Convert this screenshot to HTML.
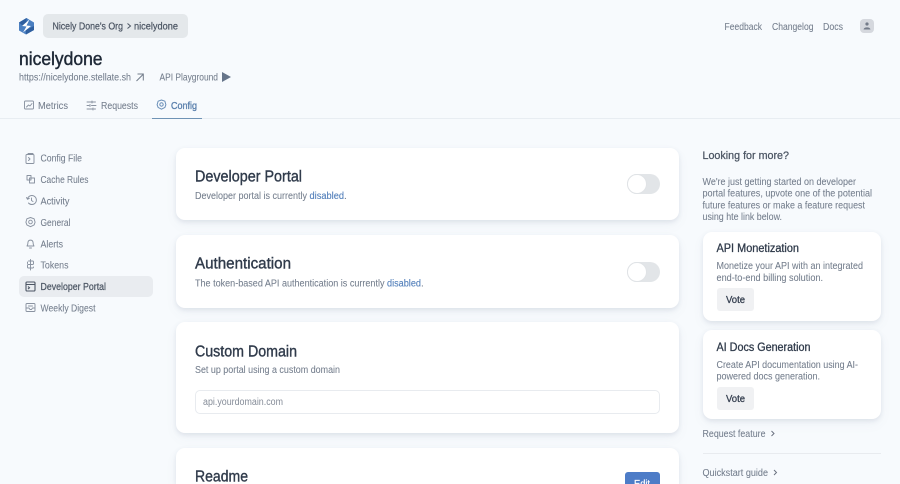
<!DOCTYPE html>
<html><head><meta charset="utf-8"><style>
html,body{margin:0;padding:0;width:900px;height:484px;overflow:hidden;background:#f7fafd}
#r{position:relative;width:900px;height:484px;overflow:hidden;background:#f7fafd}
.b{position:absolute;box-sizing:border-box}
.c{background:#fff;border-radius:9px;box-shadow:0 2px 5px rgba(100,116,139,.14),0 5px 12px rgba(100,116,139,.05)}
svg{position:absolute;left:0;top:0}
text{font-family:"Liberation Sans",sans-serif;white-space:pre}
.s{font-size:10px;fill:#737d8c;stroke:#737d8c;stroke-width:.06px}
.d{font-size:10px;fill:#4b5563;stroke:#4b5563;stroke-width:.22px}
.l{font-size:10px;fill:#5480bb;stroke:#5480bb;stroke-width:.12px}
.v{font-size:10px;fill:#374151;stroke:#374151;stroke-width:.3px}
.t{font-size:15.5px;fill:#303b4b;stroke:#303b4b;stroke-width:.38px}
.t2{font-size:11.5px;fill:#303b4b;stroke:#303b4b;stroke-width:.3px}
.ic{fill:none;stroke:#8a93a1;stroke-width:.95;stroke-linecap:round;stroke-linejoin:round}
</style></head><body><div id="r">
<div class="b" style="left:0;top:118px;width:900px;height:1px;background:#e8edf2"></div>
<div class="b" style="left:152px;top:117.5px;width:50px;height:1.5px;background:#6f93b5"></div>
<div class="b" style="left:43px;top:14px;width:145px;height:24px;background:#e4e8eb;border-radius:5px"></div>
<div class="b" style="left:860px;top:19px;width:14px;height:14px;background:#d5d8de;border-radius:4px"></div>
<div class="b" style="left:19px;top:276px;width:134px;height:21px;background:#e9ecf0;border-radius:5px"></div>
<div class="b c" style="left:176px;top:148px;width:503px;height:72px"></div>
<div class="b c" style="left:176px;top:235px;width:503px;height:73px"></div>
<div class="b c" style="left:176px;top:322px;width:503px;height:111px"></div>
<div class="b c" style="left:176px;top:448px;width:503px;height:36px;border-radius:9px 9px 0 0"></div>
<div class="b" style="left:195px;top:390px;width:465px;height:24px;background:#fff;border:1px solid #e8ebef;border-radius:5px"></div>
<div class="b" style="left:625px;top:472px;width:35px;height:12px;background:#4d7cc7;border-radius:3px 3px 0 0"></div>
<div class="b" style="left:627px;top:174px;width:33px;height:20px;background:#e2e5e8;border-radius:10px"></div>
<div class="b" style="left:627px;top:174px;width:20px;height:20px;background:#fff;border:1px solid #e0e3e6;border-radius:50%"></div>
<div class="b" style="left:627px;top:261.5px;width:33px;height:20px;background:#e2e5e8;border-radius:10px"></div>
<div class="b" style="left:627px;top:261.5px;width:20px;height:20px;background:#fff;border:1px solid #e0e3e6;border-radius:50%"></div>
<div class="b c" style="left:703px;top:232px;width:178px;height:89px"></div>
<div class="b c" style="left:703px;top:330px;width:178px;height:89px"></div>
<div class="b" style="left:717px;top:288px;width:37px;height:23px;background:#f0f1f3;border-radius:3px"></div>
<div class="b" style="left:717px;top:387px;width:37px;height:23px;background:#f0f1f3;border-radius:3px"></div>
<div class="b" style="left:703px;top:453px;width:178px;height:1px;background:#e8ebef"></div>

<svg width="900" height="484" viewBox="0 0 900 484" xmlns="http://www.w3.org/2000/svg">
<path d="M26.5 18 L34 22.5 L34 30 L26 34.5 L19 30.5 L19 22.5 Z" fill="#4a7fc1"/>
<path d="M19 22.5 L26.500 18 L26.500 23 L23 26 Z" fill="#2f5f9f"/>
<path d="M34 26 L34 30 L26 34.500 L26 30 Z" fill="#2f5f9f"/>
<path d="M29.5 19.500 L22 26 L26.500 26.500 L23 32.500 L31 26 L26.500 25.500 Z" fill="#fff"/>

<text class="d" x="52.5" y="29.5" textLength="70.5" lengthAdjust="spacingAndGlyphs">Nicely Done's Org</text>
<path d="M127.5 23.5 L130.5 26 L127.5 28.5" fill="none" stroke="#4b5563" stroke-width="1"/>
<text class="d" x="134" y="29.5" textLength="44" lengthAdjust="spacingAndGlyphs">nicelydone</text>
<text x="19" y="65" font-size="18.5" fill="#1f2937" stroke="#1f2937" stroke-width=".45" textLength="83.5" lengthAdjust="spacingAndGlyphs">nicelydone</text>
<text class="s" x="19" y="80.5" textLength="112" lengthAdjust="spacingAndGlyphs">https://nicelydone.stellate.sh</text>
<path d="M136.5 81 L143 74.5 M137.5 74 L143.3 74 L143.3 80.5" fill="none" stroke="#737d8c" stroke-width="1"/>
<text class="s" x="159.5" y="80.5" textLength="58.5" lengthAdjust="spacingAndGlyphs">API Playground</text>
<path d="M222 72 L231 77 L222 82 Z" fill="#66758a"/>
<text class="s" x="724.5" y="30" textLength="37.5" lengthAdjust="spacingAndGlyphs">Feedback</text>
<text class="s" x="772" y="30" textLength="41.5" lengthAdjust="spacingAndGlyphs">Changelog</text>
<text class="s" x="823" y="30" textLength="20" lengthAdjust="spacingAndGlyphs">Docs</text>
<circle cx="867" cy="24" r="1.6" fill="#747c8a"/>
<path d="M863.6 29.5 C863.6 26.6 870.4 26.6 870.4 29.5 Z" fill="#747c8a"/>

<path class="ic" d="M25.5 101 h7 a1 1 0 0 1 1 1 v6 a1 1 0 0 1 -1 1 h-7 a1 1 0 0 1 -1 -1 v-6 a1 1 0 0 1 1 -1 Z M26.5 107 l2 -2 l1.5 1 l2 -2.5"/>
<text class="s" x="38" y="109" textLength="30" lengthAdjust="spacingAndGlyphs">Metrics</text>
<path class="ic" d="M87 102 h8.5 M87 105.500 h2 M91.500 105.500 h4.500 M87 109 h5.500 M94 109 h1.500 M92 101 v2 M90 104.500 v2 M93 108 v2"/>
<text class="s" x="101" y="109" textLength="37" lengthAdjust="spacingAndGlyphs">Requests</text>
<path d="M161.5 100 l3.4 1.2 l1 3.500 l-1 2.700 l-3.400 1.800 l-3.400 -1.800 l-1 -2.700 l1 -3.500 Z" fill="none" stroke="#6a8fb8" stroke-width="1" stroke-linejoin="round"/>
<circle cx="161.5" cy="104.5" r="1.7" fill="none" stroke="#6a8fb8" stroke-width="1"/>
<text x="171" y="109" font-size="10" fill="#5b80ad" stroke="#5b80ad" stroke-width=".35" textLength="26" lengthAdjust="spacingAndGlyphs">Config</text>

<g class="ic">
<path d="M28 154.5 h5 a1 1 0 0 1 1 1 v7 a1 1 0 0 1 -1 1 h-6 a1 1 0 0 1 -1 -1 v-7 a1 1 0 0 1 1 -1 Z M28 153.500 h5 M28.500 157.500 l1.500 1.500 l-1.500 1.500"/>
<path d="M27 175.5 h4 v4.500 h-4 Z M29.500 178 h5 v5 h-5 Z"/>
<path d="M27.5 199 a4.500 4.500 0 1 1 1 4 M26.500 197.500 l1 1.800 l1.800 -1 M31.500 198 v2.500 l1.500 1"/>
<path d="M30.5 217.5 l3.600 1.300 l1 3.400 l-1 2.700 l-3.600 1.800 l-3.600 -1.800 l-1 -2.700 l1 -3.400 Z"/>
<circle cx="30.5" cy="222" r="1.8"/>
<path d="M27 246 c1 -1 .8 -3 1 -4 a2.600 2.600 0 0 1 5 0 c.2 1 0 3 1 4 Z M29.500 248 h2"/>
<path d="M28.5 261 h4 a1 1 0 0 1 1 1 v1.500 a1 1 0 0 1 -1 1 h-4 a1 1 0 0 0 -1 1 v1.500 a1 1 0 0 0 1 1 h4 a1 1 0 0 0 1 -1 M30.500 259.500 v10.500 M27.500 262 v1.500"/>
<path d="M27 303.5 h7 a1 1 0 0 1 1 1 v6 a1 1 0 0 1 -1 1 h-7 a1 1 0 0 1 -1 -1 v-6 a1 1 0 0 1 1 -1 Z M26.500 308 h2.500 l1 1.500 h1.500 l1 -1.500 h2.500 M28.500 306 h4"/>
</g>
<path d="M27 282 h7 a1 1 0 0 1 1 1 v7 a1 1 0 0 1 -1 1 h-7 a1 1 0 0 1 -1 -1 v-7 a1 1 0 0 1 1 -1 Z M26 284.500 h9 M28 286.500 l1.500 1.300 l-1.500 1.300" fill="none" stroke="#4b5563" stroke-width="1.1"/>
<text class="s" x="40.5" y="161.5" textLength="41.5" lengthAdjust="spacingAndGlyphs">Config File</text>
<text class="s" x="40.5" y="183" textLength="48" lengthAdjust="spacingAndGlyphs">Cache Rules</text>
<text class="s" x="40.5" y="204.5" textLength="29" lengthAdjust="spacingAndGlyphs">Activity</text>
<text class="s" x="40.5" y="226" textLength="30" lengthAdjust="spacingAndGlyphs">General</text>
<text class="s" x="40.5" y="247.5" textLength="22.5" lengthAdjust="spacingAndGlyphs">Alerts</text>
<text class="s" x="40.5" y="268.5" textLength="28" lengthAdjust="spacingAndGlyphs">Tokens</text>
<text class="s" x="40.5" y="311.5" textLength="55" lengthAdjust="spacingAndGlyphs">Weekly Digest</text>
<text class="d" x="40.5" y="290" textLength="65.5" lengthAdjust="spacingAndGlyphs">Developer Portal</text>

<text class="t" x="195" y="181.5" textLength="107" lengthAdjust="spacingAndGlyphs">Developer Portal</text>
<text class="s" x="195" y="199" textLength="112" lengthAdjust="spacingAndGlyphs">Developer portal is currently</text>
<text class="l" x="309.5" y="199" textLength="34.5" lengthAdjust="spacingAndGlyphs">disabled</text>
<text class="s" x="344" y="199">.</text>
<text class="t" x="195" y="268.5" textLength="96" lengthAdjust="spacingAndGlyphs">Authentication</text>
<text class="s" x="195" y="286.5" textLength="189.5" lengthAdjust="spacingAndGlyphs">The token-based API authentication is currently</text>
<text class="l" x="387" y="286.5" textLength="34" lengthAdjust="spacingAndGlyphs">disabled</text>
<text class="s" x="421" y="286.5">.</text>
<text class="t" x="195" y="356.5" textLength="102" lengthAdjust="spacingAndGlyphs">Custom Domain</text>
<text class="s" x="195" y="373" textLength="145" lengthAdjust="spacingAndGlyphs">Set up portal using a custom domain</text>
<text x="203" y="405" font-size="10" fill="#858c98" textLength="80" lengthAdjust="spacingAndGlyphs">api.yourdomain.com</text>
<text class="t" x="195" y="481.5" textLength="53" lengthAdjust="spacingAndGlyphs">Readme</text>
<text x="634" y="487" font-size="10" fill="#fff" stroke="#fff" stroke-width=".2" textLength="16" lengthAdjust="spacingAndGlyphs">Edit</text>

<text x="702.5" y="159" font-size="11" fill="#4b5563" stroke="#4b5563" stroke-width=".25" textLength="86.5" lengthAdjust="spacingAndGlyphs">Looking for more?</text>
<text class="s" x="702.5" y="185" textLength="153.5" lengthAdjust="spacingAndGlyphs">We're just getting started on developer</text>
<text class="s" x="702.5" y="196.5" textLength="169.5" lengthAdjust="spacingAndGlyphs">portal features, upvote one of the potential</text>
<text class="s" x="702.5" y="208.5" textLength="162.5" lengthAdjust="spacingAndGlyphs">future features or make a feature request</text>
<text class="s" x="702.5" y="220" textLength="79.5" lengthAdjust="spacingAndGlyphs">using hte link below.</text>
<text class="t2" x="716.5" y="252" textLength="82.5" lengthAdjust="spacingAndGlyphs">API Monetization</text>
<text class="s" x="716.5" y="269" textLength="146.5" lengthAdjust="spacingAndGlyphs">Monetize your API with an integrated</text>
<text class="s" x="716.5" y="281" textLength="106.5" lengthAdjust="spacingAndGlyphs">end-to-end billing solution.</text>
<text class="v" x="726" y="303" textLength="19" lengthAdjust="spacingAndGlyphs">Vote</text>
<text class="t2" x="716.5" y="351" textLength="94" lengthAdjust="spacingAndGlyphs">AI Docs Generation</text>
<text class="s" x="716.5" y="368" textLength="141.5" lengthAdjust="spacingAndGlyphs">Create API documentation using AI-</text>
<text class="s" x="716.5" y="379.5" textLength="103.5" lengthAdjust="spacingAndGlyphs">powered docs generation.</text>
<text class="v" x="726" y="402" textLength="19" lengthAdjust="spacingAndGlyphs">Vote</text>
<text class="s" x="702.5" y="437" textLength="63" lengthAdjust="spacingAndGlyphs">Request feature</text>
<path d="M771.5 431 L774 433.5 L771.5 436" fill="none" stroke="#6b7280" stroke-width="1"/>
<text class="s" x="702.5" y="476" textLength="65.5" lengthAdjust="spacingAndGlyphs">Quickstart guide</text>
<path d="M774 470 L776.5 472.5 L774 475" fill="none" stroke="#6b7280" stroke-width="1"/>
</svg>
</div></body></html>
